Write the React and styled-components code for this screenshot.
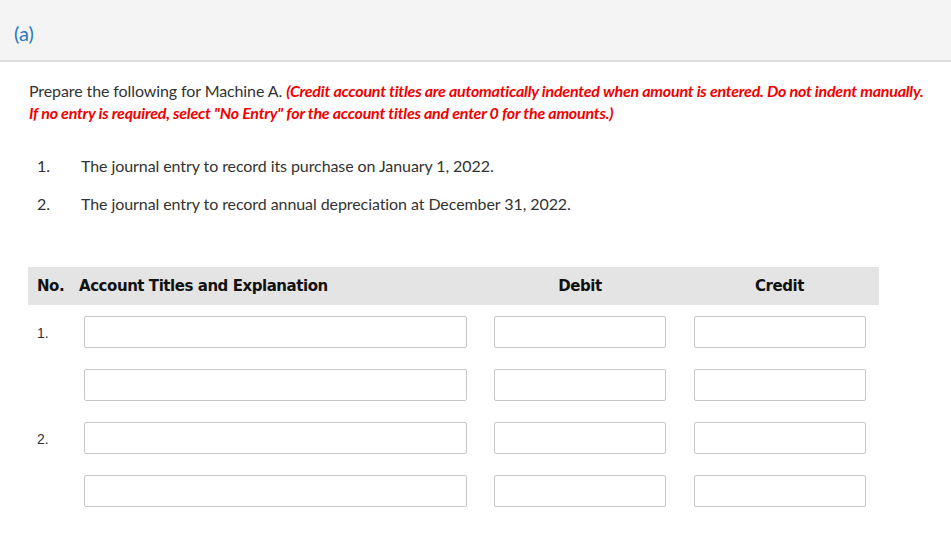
import React from 'react'
import styled, { createGlobalStyle } from 'styled-components'

const Global = createGlobalStyle`
    body {
        margin: 0;
        background: #fff;
        font-family: Lato, "Open Sans", sans-serif;
        color: #333;
    }`

const rows = [
    { no: '1.' },
    { no: '' },
    { no: '2.' },
    { no: '' },
]

export default function App() {
    return (
        <Page>
            <Global />
            <Header>
                <Part>(a)</Part>
            </Header>
            <Body>
                <Intro>
                    Prepare the following for Machine A.{' '}
                    <Warn>
                        (Credit account titles are automatically indented when amount is entered. Do not indent manually.
                        <br />
                        If no entry is required, select "No Entry" for the account titles and enter 0 for the amounts.)
                    </Warn>
                </Intro>
                <List>
                    <Item>
                        <Num>1.</Num>
                        <span>The journal entry to record its purchase on January 1, 2022.</span>
                    </Item>
                    <Item>
                        <Num>2.</Num>
                        <span>The journal entry to record annual depreciation at December 31, 2022.</span>
                    </Item>
                </List>
                <Table>
                    <HeadRow>
                        <Th indent="9px">No.</Th>
                        <Th>Account Titles and Explanation</Th>
                        <Th center>Debit</Th>
                        <Th center>Credit</Th>
                    </HeadRow>
                    {rows.map((r, i) => (
                        <Row key={i}>
                            <RowNo>{r.no}</RowNo>
                            <Cell>
                                <Input wide />
                            </Cell>
                            <Cell center>
                                <Input />
                            </Cell>
                            <Cell center>
                                <Input />
                            </Cell>
                        </Row>
                    ))}
                </Table>
            </Body>
        </Page>
    )
}

const Page = styled.div`
    width: 951px;
    min-height: 541px;`
const Header = styled.div`
    height: 62px;
    background: #f4f4f4;
    border-bottom: 2px solid #dedede;
    display: flex;
    align-items: center;
    padding-left: 14px;
    padding-top: 5px;
    box-sizing: border-box;`
const Part = styled.span`
    font-family: Lato, sans-serif;
    font-weight: 400;
    font-size: 20px;
    color: #2a78b6;`
const Body = styled.div`
    padding: 18px 0 0 29px;`
const Intro = styled.p`
    margin: 0;
    font-size: 16px;
    line-height: 22px;
    letter-spacing: -0.1px;
    width: 910px;`
const Warn = styled.span`
    color: #f20000;
    font-weight: 700;
    font-style: italic;
    letter-spacing: -0.22px;`
const List = styled.ol`
    list-style: none;
    margin: 31px 0 0 0;
    padding: 0 0 0 8px;
    display: flex;
    flex-direction: column;
    gap: 16px;`
const Item = styled.li`
    display: flex;
    font-size: 16px;
    line-height: 22px;
    letter-spacing: -0.08px;`
const Num = styled.span`
    width: 44px;`
const Table = styled.div`
    margin-top: 52px;
    width: 851px;
    margin-left: -1px;`
const HeadRow = styled.div`
    display: grid;
    grid-template-columns: 51px 401px 200px 199px;
    height: 38px;
    align-items: center;
    background: #e4e4e4;
    margin-bottom: 11px;`
const Th = styled.div`
    font-family: Tahoma, "DejaVu Sans", sans-serif;
    font-weight: 700;
    font-size: 15px;
    color: #111;
    padding-left: ${p => p.indent || '0'};
    text-align: ${p => (p.center ? 'center' : 'left')};
    letter-spacing: -0.45px;`
const Row = styled.div`
    display: grid;
    grid-template-columns: 51px 401px 200px 199px;
    height: 53px;`
const RowNo = styled.div`
    font-family: "Liberation Sans", Arial, sans-serif;
    font-size: 14px;
    color: #333;
    padding: 9px 0 0 9px;`
const Cell = styled.div`
    display: flex;
    justify-content: ${p => (p.center ? 'center' : 'flex-start')};
    padding-left: ${p => (p.center ? '0' : '5px')};`
const Input = styled.div`
    width: ${p => (p.wide ? '383px' : '172px')};
    height: 32px;
    box-sizing: border-box;
    border: 1px solid #c8c8c8;
    border-radius: 2px;
    background: #fff;`
